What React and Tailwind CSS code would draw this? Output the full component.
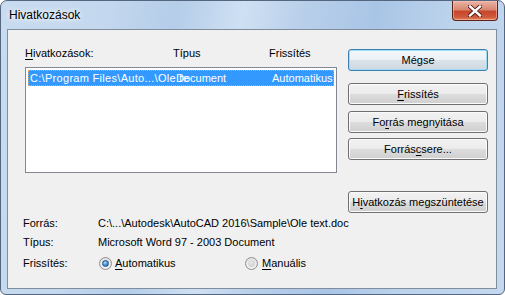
import React from "react";

const font = { fontFamily: '"Liberation Sans", Arial, sans-serif' };

function Btn({ children, def, className = "" }) {
  return (
    <div
      className={
        "flex h-[22px] w-[140px] items-center justify-center rounded-[3px] border text-[11px] leading-[13px] text-black " +
        (def
          ? "border-[#3c7fb1] shadow-[inset_0_0_0_1px_#9fdcf6] bg-[linear-gradient(#f4f8fb_0%,#eaf0f5_50%,#dbe3ea_50%,#cfd8e0_100%)] "
          : "border-[#707070] shadow-[inset_0_0_0_1px_#fbfbfb] bg-[linear-gradient(#f2f2f2_0%,#ebebeb_50%,#dddddd_50%,#cfcfcf_100%)] ") +
        className
      }
    >
      {children}
    </div>
  );
}

function U({ children }) {
  return <span className="underline underline-offset-[2px] decoration-[1px]">{children}</span>;
}

function Radio({ checked }) {
  return (
    <div className="flex h-[13px] w-[13px] items-center justify-center rounded-full border border-[#8f8f8f] bg-[radial-gradient(circle_at_50%_60%,#ffffff_0%,#f0f0f0_45%,#cfcfcf_100%)]">
      {checked ? (
        <div className="h-[7px] w-[7px] rounded-full border border-[#1f4f86] bg-[radial-gradient(circle_at_40%_35%,#b9e0ff_0%,#4e9be0_45%,#1b5ea8_100%)]" />
      ) : (
        <div className="h-[7px] w-[7px] rounded-full bg-[radial-gradient(circle_at_45%_40%,#e8e8e8_0%,#d4d4d4_60%,#c6c6c6_100%)]" />
      )}
    </div>
  );
}

export default function App() {
  return (
    <div
      style={font}
      className="flex h-[295px] w-[505px] flex-col rounded-t-[7px] rounded-b-[6px] border border-[#54677f] bg-[linear-gradient(100deg,#c8dbf0_0%,#c3d7ee_20%,#b4cde9_32%,#cfe0f3_44%,#b8cfea_55%,#a9c5e6_68%,#bcd3ec_82%,#c4d8ef_100%)]"
    >
      {/* Title bar */}
      <div className="flex h-[28px] items-start justify-between">
        <div className="pl-[8px] pt-[7px] text-[12px] leading-[14px] text-black [text-shadow:0_0_8px_#ffffff,0_0_4px_#ffffff]">
          Hivatkozások
        </div>
        <div className="mr-[6px] flex h-[20px] w-[46px] items-center justify-center rounded-b-[4px] border border-t-0 border-[#5c2418] bg-[linear-gradient(#eab4a6_0%,#d98872_45%,#c8462c_55%,#cf5a3b_85%,#e08a5e_100%)] shadow-[inset_0_0_0_1px_rgba(255,200,190,0.5)]">
          <svg width="14" height="12" viewBox="0 0 14 12">
            <path d="M2 1.5 L12 10.5 M12 1.5 L2 10.5" stroke="#4a1a10" strokeWidth="4.2" strokeLinecap="square" />
            <path d="M2 1.5 L12 10.5 M12 1.5 L2 10.5" stroke="#ffffff" strokeWidth="2.4" strokeLinecap="square" />
          </svg>
        </div>
      </div>

      {/* Client area */}
      <div className="mb-[5px] ml-[6px] mr-[7px] flex flex-1 flex-col border border-[#7f8d9c] bg-[#f0f0f0] pl-[15px] pt-[16px] text-[11px] leading-[14px] text-black">
        <div className="ml-[2px] flex">
          {/* left column */}
          <div className="flex w-[312px] flex-col">
            <div className="grid h-[14px] grid-cols-[148px_96px_1fr]">
              <span>
                <U>H</U>ivatkozások:
              </span>
              <span>Típus</span>
              <span>Frissítés</span>
            </div>
            <div className="mt-[7px] h-[106px] border border-[#828790] bg-white p-[2px]">
              <div className="grid h-[16px] grid-cols-[146px_96px_1fr] items-center border border-dotted border-[#e8a060] bg-[#3399ff] pl-[1px] text-white">
                <span className="overflow-visible whitespace-nowrap tracking-[0.3px]">C:\Program Files\Auto...\Ole te</span>
                <span className="whitespace-nowrap">Document</span>
                <span className="whitespace-nowrap">Automatikus</span>
              </div>
            </div>
          </div>

          {/* right column */}
          <div className="ml-[11px] mt-[3px] flex flex-col">
            <Btn def>Mégse</Btn>
            <Btn className="mt-[12px]">
              <span>
                <U>F</U>rissítés
              </span>
            </Btn>
            <Btn className="mt-[6px]">
              <span>
                Fo<U>r</U>rás megnyitása
              </span>
            </Btn>
            <Btn className="mt-[5px]">
              <span>
                Forrás<U>c</U>sere...
              </span>
            </Btn>
            <Btn className="mt-[31px]">
              <span>
                H<U>i</U>vatkozás megszüntetése
              </span>
            </Btn>
          </div>
        </div>

        {/* Info rows */}
        <div className="mt-[3px] flex h-[14px]">
          <span className="w-[75px]">Forrás:</span>
          <span className="whitespace-nowrap">C:\...\Autodesk\AutoCAD 2016\Sample\Ole text.doc</span>
        </div>
        <div className="mt-[5px] flex h-[14px]">
          <span className="w-[75px]">Típus:</span>
          <span>Microsoft Word 97 - 2003 Document</span>
        </div>
        <div className="mt-[7px] flex h-[14px] items-center">
          <span className="w-[76px]">Frissítés:</span>
          <div className="flex w-[146px] items-center gap-[3px]">
            <Radio checked />
            <span>
              <U>A</U>utomatikus
            </span>
          </div>
          <div className="flex items-center gap-[4px]">
            <Radio />
            <span>
              <U>M</U>anuális
            </span>
          </div>
        </div>
      </div>
    </div>
  );
}
